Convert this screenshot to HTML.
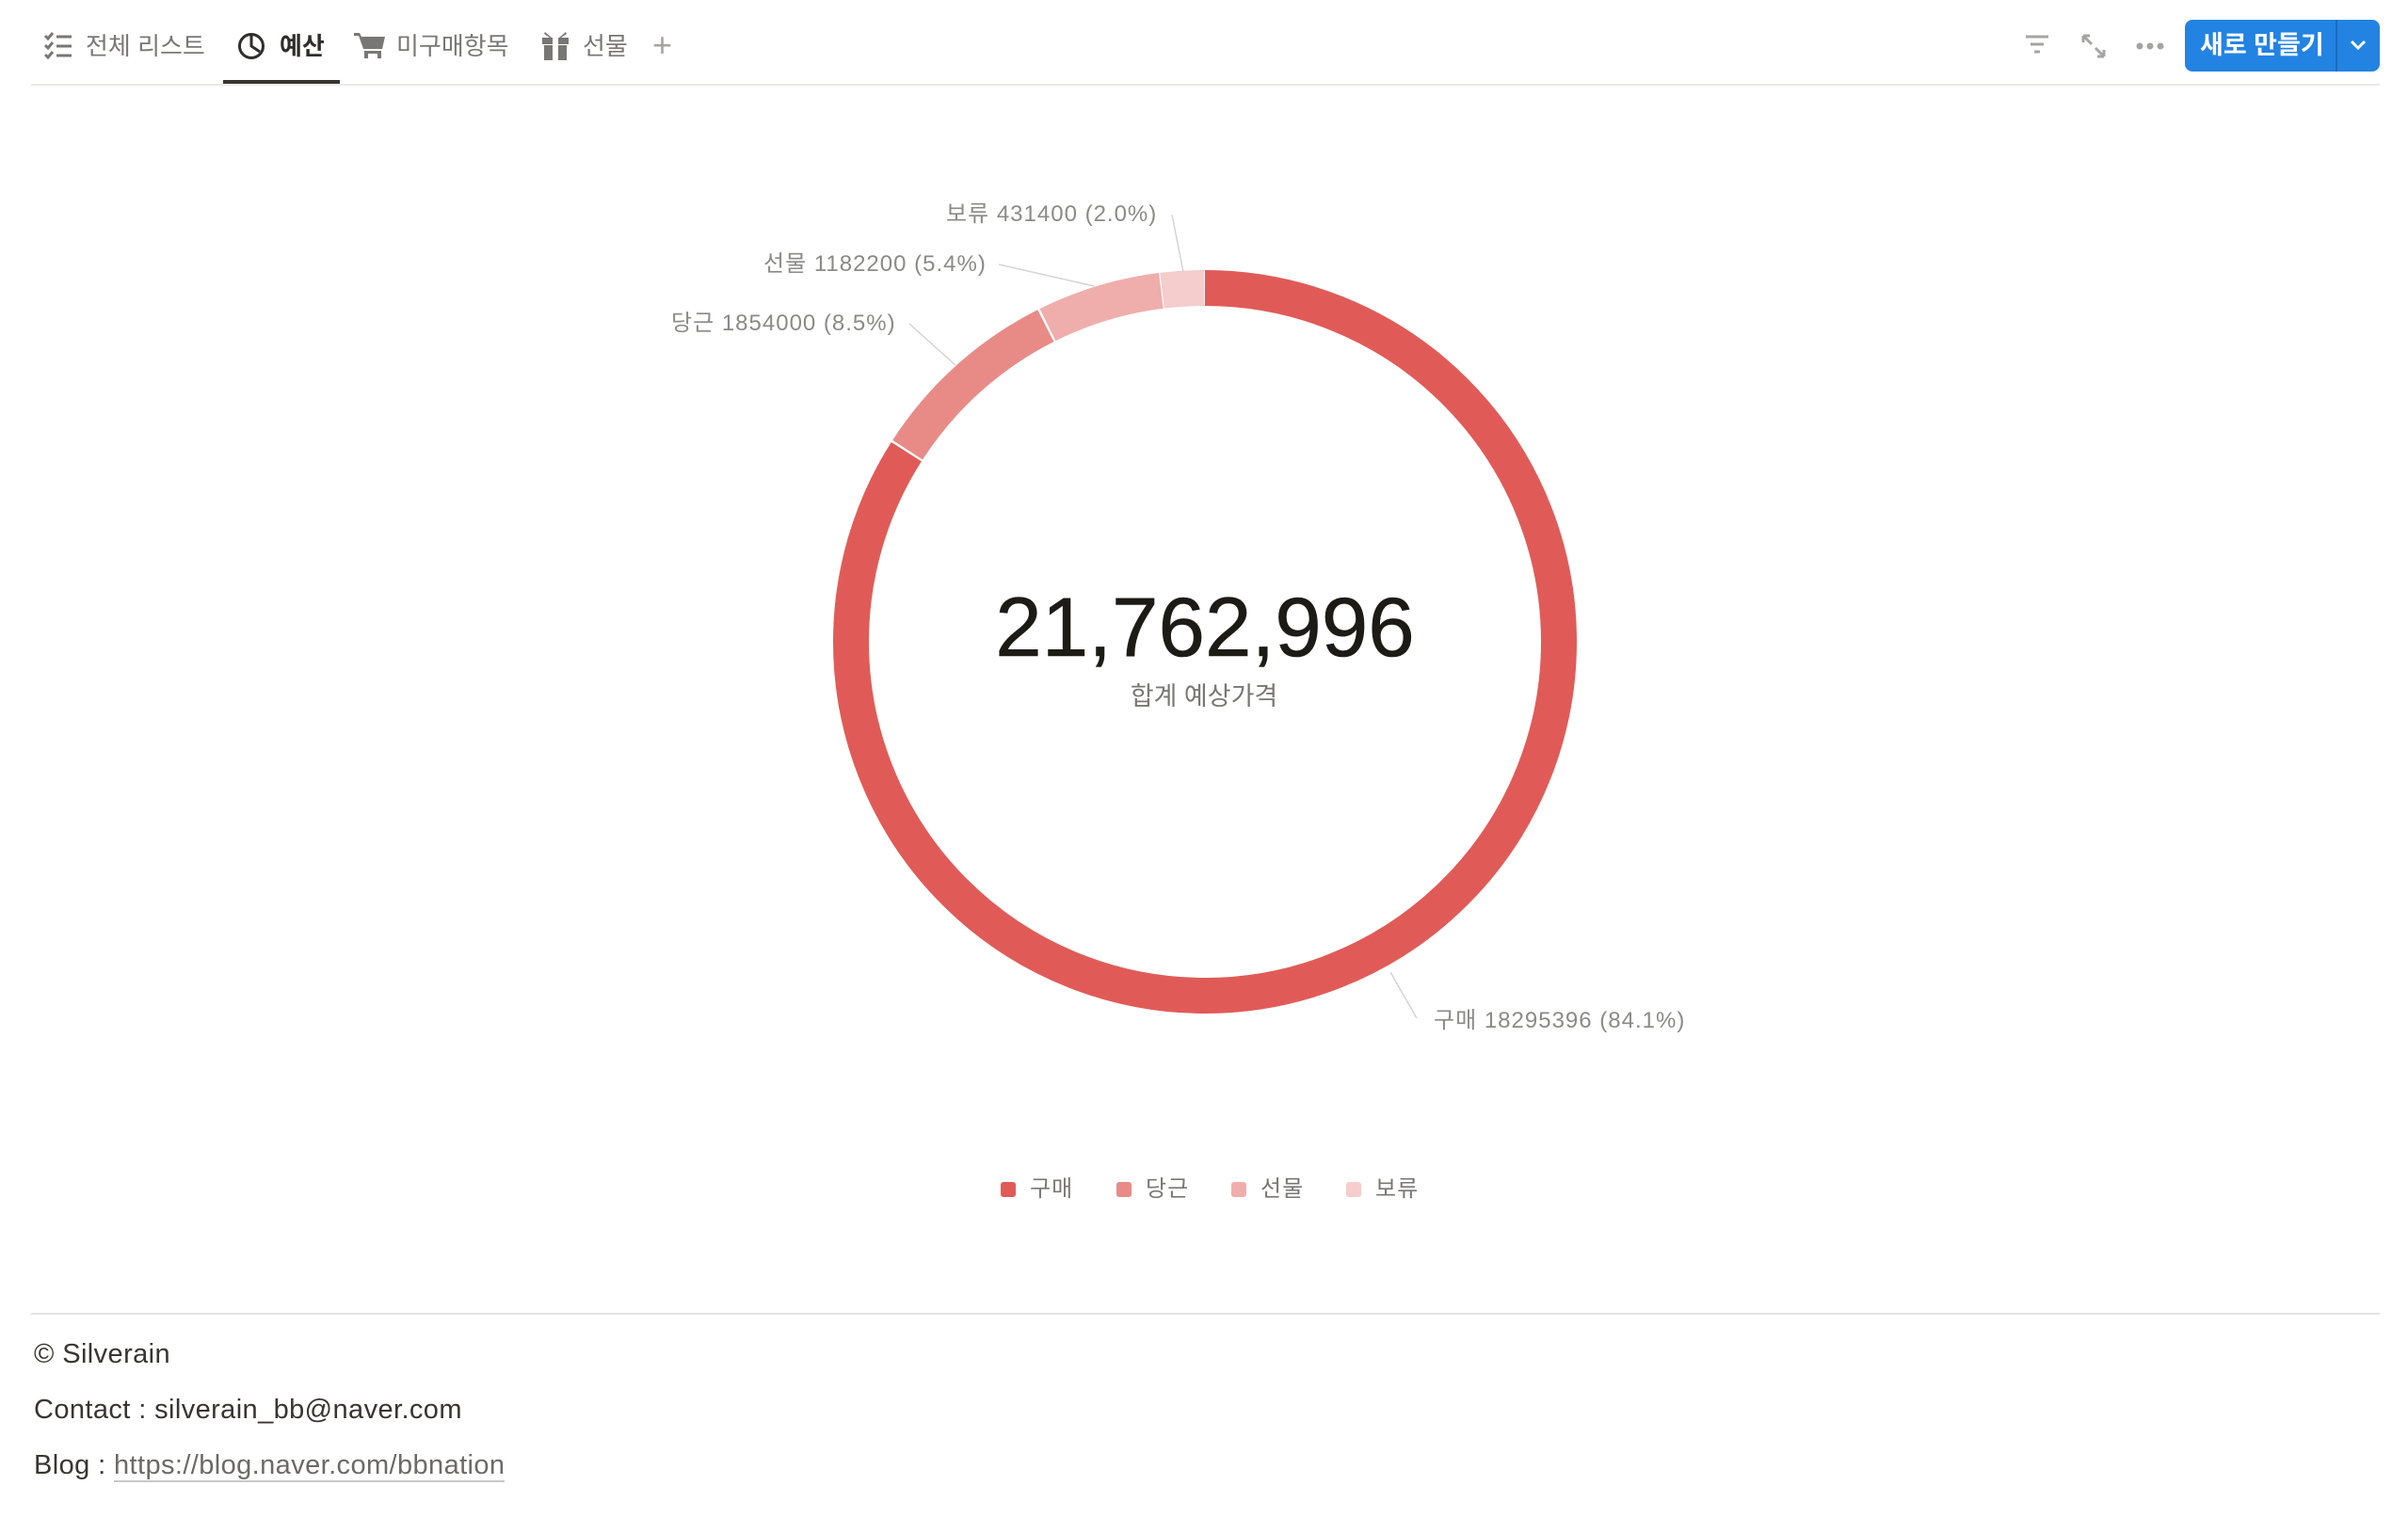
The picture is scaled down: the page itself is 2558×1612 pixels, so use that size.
<!DOCTYPE html>
<html><head><meta charset="utf-8"><style>
body{margin:0;width:2558px;height:1612px;background:#fff;font-family:"Liberation Sans","Noto Sans CJK KR",sans-serif;overflow:hidden;position:relative}
.a{position:absolute;white-space:nowrap}
.tab{font-size:26px;color:#787774;top:32px;line-height:34px}
.lbl{font-size:24px;color:#8a8a87;line-height:28px;letter-spacing:1px}
.ft{font-size:29px;color:#37352f;left:36px;line-height:34px;letter-spacing:0.4px}
</style></head><body>
<svg class="a" style="left:46px;top:34px" width="32" height="30" viewBox="0 0 32 30" fill="none" stroke="#787774" stroke-width="3"><path d="M2 4l3 3 5-6M2 14l3 3 5-6M2 24l3 3 5-6"/><path d="M14 5h16M14 15h16M14 25h16"/></svg>
<div class="a tab" style="left:91px">전체 리스트</div>
<svg class="a" style="left:252px;top:34px" width="30" height="30" viewBox="0 0 30 30" fill="none" stroke="#2f2e2b" stroke-width="3"><circle cx="15" cy="15" r="12.5"/><path d="M15 3v12l9 6"/></svg>
<div class="a tab" style="left:297px;color:#2f2e2b;font-weight:bold">예산</div>
<div class="a" style="left:237px;top:85px;width:124px;height:4px;background:#37352f"></div>
<svg class="a" style="left:376px;top:34px" width="34" height="30" viewBox="0 0 34 30" fill="#787774"><path d="M0 1h6l2 4h25l-3 13H10L5 4H0z"/><rect x="11" y="20" width="18" height="3"/><rect x="11" y="22" width="4" height="6"/><rect x="25" y="22" width="4" height="6"/></svg>
<div class="a tab" style="left:421px">미구매항목</div>
<svg class="a" style="left:575px;top:32px" width="30" height="32" viewBox="0 0 30 32" fill="#787774"><path d="M4 2l7 6h-2L3 4zM26 2l-7 6h2l6-4z"/><rect x="1" y="8" width="28" height="7"/><rect x="3" y="16" width="24" height="16"/><rect x="12" y="8" width="6" height="24" fill="#fff"/></svg>
<div class="a tab" style="left:619px">선물</div>
<div class="a" style="left:693px;top:27px;font-size:36px;color:#a5a4a1;font-weight:300">+</div>
<div class="a" style="left:33px;top:89px;width:2495px;height:2px;background:#e9e9e7"></div>
<svg class="a" style="left:2150px;top:36px" width="28" height="22" viewBox="0 0 28 22" stroke="#a5a4a1" stroke-width="3" fill="none"><path d="M2 3h24M7 11h14M11 19h6"/></svg>
<svg class="a" style="left:2210px;top:35px" width="28" height="28" viewBox="0 0 28 28" stroke="#a5a4a1" stroke-width="3" fill="none"><path d="M3 3l9 9M3 3v7M3 3h7M25 25l-9-9M25 25v-7M25 25h-7"/></svg>
<svg class="a" style="left:2269px;top:44px" width="30" height="10" viewBox="0 0 30 10" fill="#a5a4a1"><circle cx="4" cy="5" r="3.5"/><circle cx="15" cy="5" r="3.5"/><circle cx="26" cy="5" r="3.5"/></svg>
<div class="a" style="left:2321px;top:21px;width:207px;height:55px;background:#2383e2;border-radius:8px"></div>
<div class="a" style="left:2481px;top:21px;width:2px;height:55px;background:#1b6cbd"></div>
<div class="a" style="left:2337px;top:30px;font-size:27px;color:#fff;font-weight:bold;line-height:36px">새로 만들기</div>
<svg class="a" style="left:2495px;top:41px" width="20" height="14" viewBox="0 0 20 14" stroke="#fff" stroke-width="3" fill="none"><path d="M3 3l7 7 7-7"/></svg>
<svg class="a" style="left:0;top:0" width="2558" height="1612">
<g transform="rotate(-90 1280 682)" fill="none" stroke-width="38">
<circle cx="1280" cy="682" r="376" pathLength="100" stroke="#e05b57" stroke-dasharray="84.05 100" stroke-dashoffset="0"/>
<circle cx="1280" cy="682" r="376" pathLength="100" stroke="#e88b87" stroke-dasharray="8.45 100" stroke-dashoffset="-84.15"/>
<circle cx="1280" cy="682" r="376" pathLength="100" stroke="#efaeab" stroke-dasharray="5.35 100" stroke-dashoffset="-92.7"/>
<circle cx="1280" cy="682" r="376" pathLength="100" stroke="#f5cdcc" stroke-dasharray="1.9 100" stroke-dashoffset="-98.1"/>
</g>
<g stroke="#d4d4d2" stroke-width="1.5"><path d="M1245 228L1257 289"/><path d="M1061 281L1162 304"/><path d="M966 344L1015 388"/><path d="M1477 1033L1505 1082"/></g>
</svg>
<div class="a lbl" style="left:1005px;top:214px">보류 431400 (2.0%)</div>
<div class="a lbl" style="left:811px;top:267px">선물 1182200 (5.4%)</div>
<div class="a lbl" style="left:713px;top:330px">당근 1854000 (8.5%)</div>
<div class="a lbl" style="left:1523px;top:1071px">구매 18295396 (84.1%)</div>
<div class="a" style="left:0;width:2558px;text-align:center;top:616px;font-size:89px;line-height:100px;color:#1d1b16;text-indent:2px;font-weight:500;-webkit-text-stroke:0.6px #1d1b16">21,762,996</div>
<div class="a" style="left:0;width:2558px;text-align:center;top:723px;font-size:27px;line-height:34px;color:#787774">합계 예상가격</div>
<div class="a" style="left:1063px;top:1256px;width:16px;height:16px;border-radius:3px;background:#e05b57"></div>
<div class="a lbl" style="left:1094px;top:1250px;color:#787774">구매</div>
<div class="a" style="left:1186px;top:1256px;width:16px;height:16px;border-radius:3px;background:#e88b87"></div>
<div class="a lbl" style="left:1217px;top:1250px;color:#787774">당근</div>
<div class="a" style="left:1308px;top:1256px;width:16px;height:16px;border-radius:3px;background:#efaeab"></div>
<div class="a lbl" style="left:1339px;top:1250px;color:#787774">선물</div>
<div class="a" style="left:1430px;top:1256px;width:16px;height:16px;border-radius:3px;background:#f5cdcc"></div>
<div class="a lbl" style="left:1461px;top:1250px;color:#787774">보류</div>
<div class="a" style="left:33px;top:1395px;width:2495px;height:2px;background:#e3e3e1"></div>
<div class="a ft" style="top:1422px">© Silverain</div>
<div class="a ft" style="top:1481px">Contact : silverain_bb@naver.com</div>
<div class="a ft" style="top:1540px">Blog : <span style="color:#6b6a66;border-bottom:2px solid #c8c8c6">https://blog.naver.com/bbnation</span></div>
</body></html>
